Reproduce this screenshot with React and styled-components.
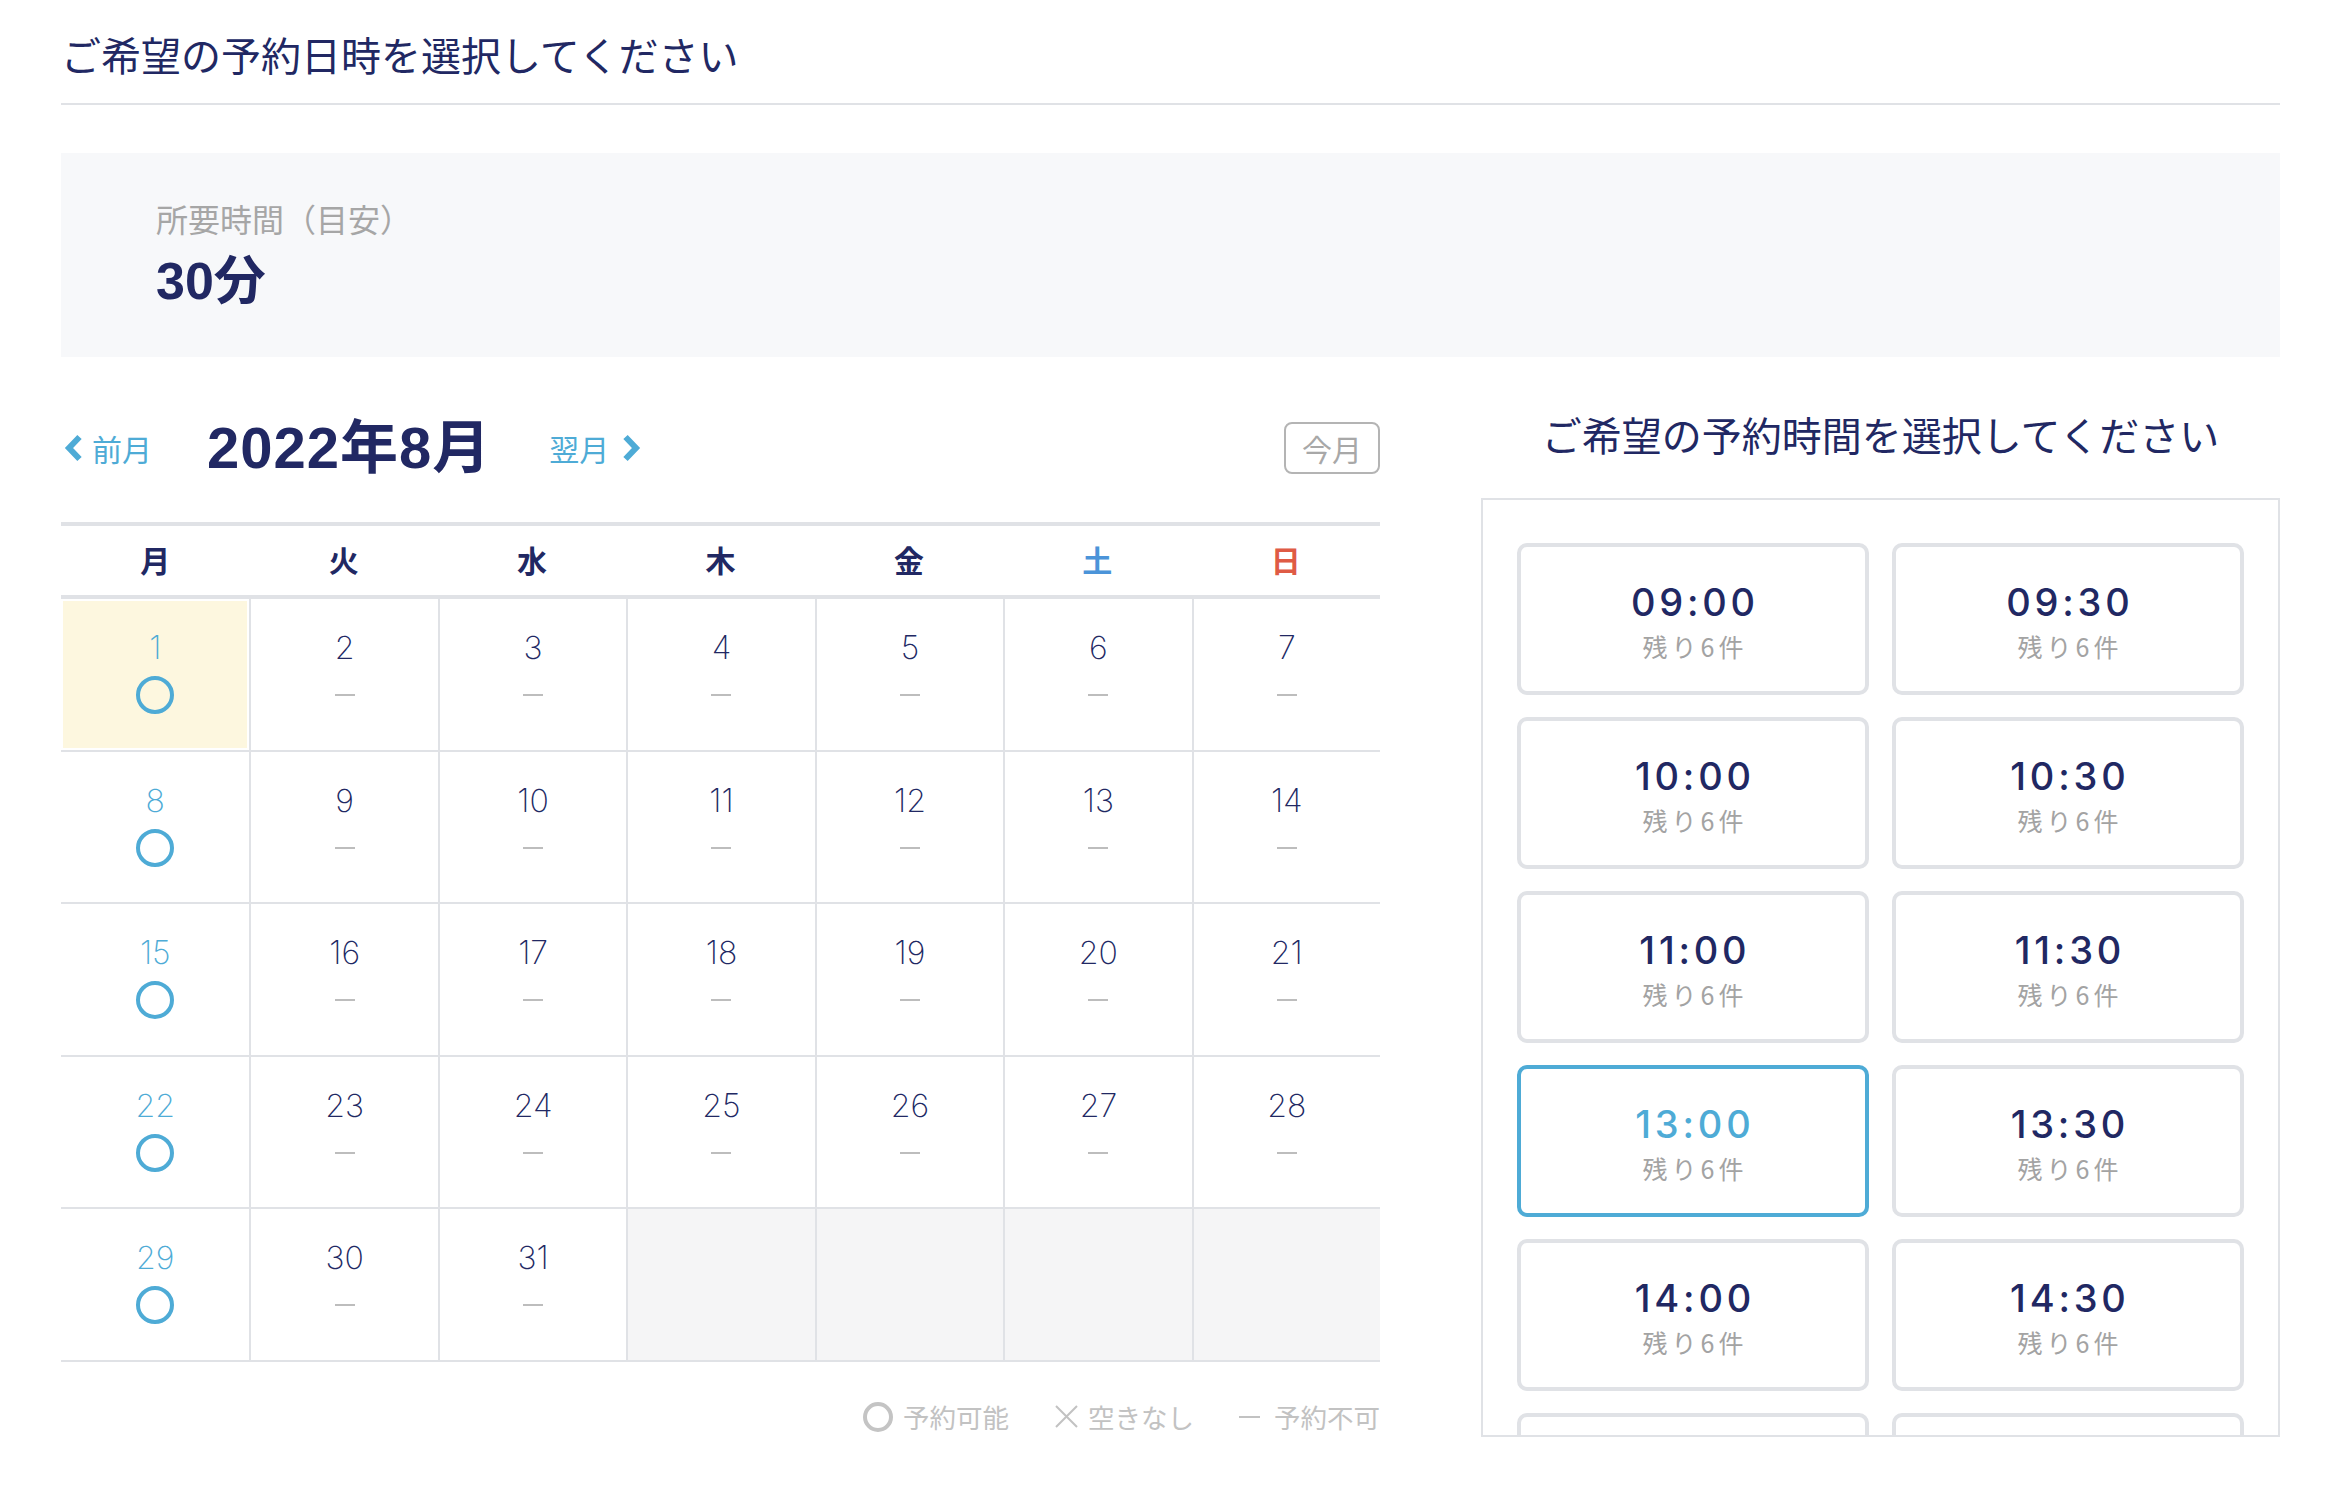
import React from 'react';
import styled, { createGlobalStyle } from 'styled-components';

const NAVY = '#212863';
const SKY = '#4eabd6';
const LINE = '#e0e2e6';
const JP = '"Noto Sans CJK JP", sans-serif';
const LATIN = 'Inter, "Noto Sans CJK JP", sans-serif';

const GlobalStyle = createGlobalStyle`
  html, body {
    margin: 0;
    padding: 0;
    background: #ffffff;
  }
  body {
    font-family: ${JP};
    color: ${NAVY};
    -webkit-font-smoothing: antialiased;
  }
  * { box-sizing: border-box; }
`;

const Page = styled.div`
  padding: 0 59px 0 61px;
`;

const PageTitle = styled.h1`
  margin: 0;
  padding: 24px 0 19px;
  font-size: 40px;
  font-weight: 400;
  line-height: 60px;
  color: ${NAVY};
  border-bottom: 2px solid ${LINE};
`;

const DurationBox = styled.section`
  margin-top: 48px;
  padding: 43px 95px 42px;
  background: #f7f8fa;
`;

const DurationLabel = styled.div`
  font-size: 32px;
  line-height: 45px;
  color: #a6a6a6;
`;

const DurationValue = styled.div`
  margin-top: 6px;
  font-family: "Liberation Sans", ${JP};
  font-size: 52px;
  font-weight: 700;
  line-height: 68px;
  color: ${NAVY};
`;

const Main = styled.div`
  display: flex;
  gap: 101px;
  margin-top: 56px;
`;

const CalendarColumn = styled.section`
  width: 1319px;
  flex: none;
`;

const CalNav = styled.div`
  display: flex;
  align-items: center;
  height: 70px;
`;

const NavLink = styled.a`
  display: flex;
  align-items: center;
  gap: ${(p) => (p.$next ? '11px' : '7px')};
  margin-left: ${(p) => p.$offset}px;
  font-size: 30px;
  line-height: 1;
  color: ${SKY};
  cursor: pointer;
  text-decoration: none;
`;

const MonthHeading = styled.h2`
  margin: 0 0 0 55px;
  font-family: "Liberation Sans", ${JP};
  font-size: 58px;
  font-weight: 700;
  letter-spacing: 1px;
  line-height: 70px;
  color: ${NAVY};
`;

const TodayButton = styled.button`
  margin-left: auto;
  height: 52px;
  padding: 0 16px;
  border: 2px solid #b4b4b4;
  border-radius: 8px;
  background: #ffffff;
  font-family: ${JP};
  font-size: 30px;
  line-height: 1;
  color: #a8a8a8;
  cursor: pointer;
`;

const WeekHeader = styled.div`
  display: grid;
  grid-template-columns: repeat(7, 1fr);
  height: 77px;
  margin-top: 39px;
  padding-bottom: 4px;
  border-top: 4px solid ${LINE};
  border-bottom: 4px solid ${LINE};
`;

const WeekdayCell = styled.div`
  display: flex;
  align-items: center;
  justify-content: center;
  font-size: 30px;
  font-weight: 700;
  color: ${(p) => p.$color};
`;

const DayGrid = styled.div`
  display: grid;
  grid-template-columns: repeat(7, 1fr);
  grid-auto-rows: 152.5px;
`;

const DayCell = styled.div`
  display: flex;
  flex-direction: column;
  align-items: center;
  padding-top: 30px;
  border-bottom: 2px solid ${LINE};
  border-left: ${(p) => (p.$first ? 'none' : `2px solid ${LINE}`)};
  background: ${(p) => (p.$today ? '#fdf7df' : p.$blank ? '#f5f5f6' : '#ffffff')};
  box-shadow: ${(p) => (p.$today ? 'inset 0 0 0 2px #ffffff' : 'none')};
`;

const DayNumber = styled.div`
  font-family: ${LATIN};
  font-size: 32px;
  font-weight: 200;
  line-height: 38px;
  color: ${(p) => (p.$open ? SKY : NAVY)};
`;

const DayStatus = styled.div`
  display: flex;
  align-items: center;
  justify-content: center;
  height: 40px;
  margin-top: 8px;
`;

const OpenMark = styled.span`
  display: block;
  width: ${(p) => p.$size}px;
  height: ${(p) => p.$size}px;
  border: ${(p) => p.$stroke}px solid ${(p) => p.$color};
  border-radius: 50%;
`;

const ClosedMark = styled.span`
  display: block;
  width: ${(p) => p.$width}px;
  height: 2px;
  background: ${(p) => p.$color};
`;

const Legend = styled.div`
  display: flex;
  justify-content: flex-end;
  align-items: center;
  gap: 45px;
  margin-top: 37px;
  font-size: 26.5px;
  line-height: 36px;
  color: #c2c2c2;
`;

const LegendItem = styled.div`
  display: flex;
  align-items: center;
  gap: ${(p) => p.$gap}px;
`;

const SlotColumn = styled.section`
  flex: 1;
  min-width: 0;
`;

const SlotTitle = styled.h2`
  margin: 0;
  font-size: 40px;
  font-weight: 400;
  line-height: 42px;
  text-align: center;
  color: ${NAVY};
`;

const SlotPanel = styled.div`
  height: 939px;
  margin-top: 43px;
  padding: 43px 34px 0;
  border: 2px solid ${LINE};
  overflow: hidden;
`;

const SlotGrid = styled.div`
  display: grid;
  grid-template-columns: repeat(2, 1fr);
  column-gap: 23px;
  row-gap: 22px;
`;

const SlotCard = styled.button`
  display: flex;
  flex-direction: column;
  align-items: center;
  justify-content: center;
  height: 152px;
  padding: 4px 0 0;
  border: 4px solid ${(p) => (p.$selected ? SKY : LINE)};
  border-radius: 10px;
  background: #ffffff;
  cursor: pointer;
`;

const SlotTime = styled.span`
  padding-left: 0.1em;
  font-family: ${LATIN};
  font-size: 38px;
  font-weight: 500;
  letter-spacing: 0.1em;
  line-height: 46px;
  color: ${(p) => (p.$selected ? SKY : NAVY)};
`;

const SlotLeft = styled.span`
  margin-top: 4px;
  padding-left: 0.16em;
  font-family: ${JP};
  font-size: 25px;
  letter-spacing: 0.16em;
  line-height: 34px;
  color: #a3a3a3;
`;

const Chevron = ({ dir }) => (
  <svg width="22" height="28" viewBox="0 0 22 28" aria-hidden="true">
    <polyline
      points={dir === 'left' ? '16.5,3 6,14 16.5,25' : '5.5,3 16,14 5.5,25'}
      fill="none"
      stroke={SKY}
      strokeWidth="6"
    />
  </svg>
);

const CrossMark = () => (
  <svg width="25" height="25" viewBox="0 0 25 25" aria-hidden="true">
    <path d="M2 2 L23 23 M23 2 L2 23" stroke="#c2c2c2" strokeWidth="2" fill="none" />
  </svg>
);

const WEEKDAYS = [
  { label: '月', color: NAVY },
  { label: '火', color: NAVY },
  { label: '水', color: NAVY },
  { label: '木', color: NAVY },
  { label: '金', color: NAVY },
  { label: '土', color: '#4b94d9' },
  { label: '日', color: '#df5b45' },
];

// August 2022 starts on a Monday; Mondays are the bookable days.
const days = Array.from({ length: 35 }, (_, i) => (i < 31 ? i + 1 : null));

const SLOTS = [
  '09:00', '09:30', '10:00', '10:30', '11:00', '11:30',
  '13:00', '13:30', '14:00', '14:30', '15:00', '15:30',
];

export default function App() {
  return (
    <Page>
      <GlobalStyle />
      <PageTitle>ご希望の予約日時を選択してください</PageTitle>

      <DurationBox>
        <DurationLabel>所要時間（目安）</DurationLabel>
        <DurationValue>30分</DurationValue>
      </DurationBox>

      <Main>
        <CalendarColumn>
          <CalNav>
            <NavLink $offset={2}>
              <Chevron dir="left" />
              前月
            </NavLink>
            <MonthHeading>2022年8月</MonthHeading>
            <NavLink $offset={58} $next>
              翌月
              <Chevron dir="right" />
            </NavLink>
            <TodayButton>今月</TodayButton>
          </CalNav>

          <WeekHeader>
            {WEEKDAYS.map((w) => (
              <WeekdayCell key={w.label} $color={w.color}>
                {w.label}
              </WeekdayCell>
            ))}
          </WeekHeader>

          <DayGrid>
            {days.map((d, i) => {
              const first = i % 7 === 0;
              if (d === null) return <DayCell key={i} $first={first} $blank />;
              const open = first;
              return (
                <DayCell key={i} $first={first} $today={d === 1}>
                  <DayNumber $open={open}>{d}</DayNumber>
                  <DayStatus>
                    {open ? (
                      <OpenMark $size={38} $stroke={4} $color={SKY} />
                    ) : (
                      <ClosedMark $width={20} $color="#bdbdbd" />
                    )}
                  </DayStatus>
                </DayCell>
              );
            })}
          </DayGrid>

          <Legend>
            <LegendItem $gap={10}>
              <OpenMark $size={30} $stroke={4} $color="#c4c4c4" />
              予約可能
            </LegendItem>
            <LegendItem $gap={9}>
              <CrossMark />
              空きなし
            </LegendItem>
            <LegendItem $gap={14}>
              <ClosedMark $width={21} $color="#c2c2c2" />
              予約不可
            </LegendItem>
          </Legend>
        </CalendarColumn>

        <SlotColumn>
          <SlotTitle>ご希望の予約時間を選択してください</SlotTitle>
          <SlotPanel>
            <SlotGrid>
              {SLOTS.map((t) => {
                const selected = t === '13:00';
                return (
                  <SlotCard key={t} $selected={selected}>
                    <SlotTime $selected={selected}>{t}</SlotTime>
                    <SlotLeft>残り6件</SlotLeft>
                  </SlotCard>
                );
              })}
            </SlotGrid>
          </SlotPanel>
        </SlotColumn>
      </Main>
    </Page>
  );
}
